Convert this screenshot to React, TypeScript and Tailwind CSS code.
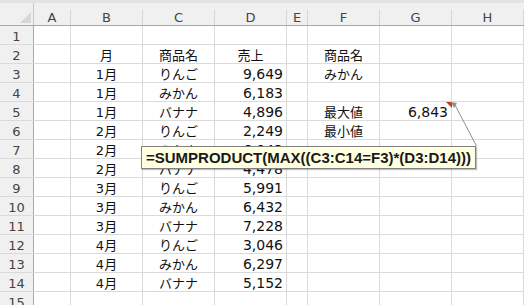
import React from 'react';

type Row = {
  b?: string;
  c?: string;
  d?: string;
  f?: string;
  g?: string;
};

const rows: Row[] = [
  {},
  { b: '月', c: '商品名', d: '売上', f: '商品名' },
  { b: '1月', c: 'りんご', d: '9,649', f: 'みかん' },
  { b: '1月', c: 'みかん', d: '6,183' },
  { b: '1月', c: 'バナナ', d: '4,896', f: '最大値', g: '6,843' },
  { b: '2月', c: 'りんご', d: '2,249', f: '最小値' },
  { b: '2月', c: 'みかん', d: '6,843' },
  { b: '2月', c: 'バナナ', d: '4,478' },
  { b: '3月', c: 'りんご', d: '5,991' },
  { b: '3月', c: 'みかん', d: '6,432' },
  { b: '3月', c: 'バナナ', d: '7,228' },
  { b: '4月', c: 'りんご', d: '3,046' },
  { b: '4月', c: 'みかん', d: '6,297' },
  { b: '4月', c: 'バナナ', d: '5,152' },
  {},
];

const columns = [
  { key: 'A', w: 'w-[37px]' },
  { key: 'B', w: 'w-[72px]' },
  { key: 'C', w: 'w-[72px]' },
  { key: 'D', w: 'w-[72px]' },
  { key: 'E', w: 'w-[21px]' },
  { key: 'F', w: 'w-[72px]' },
  { key: 'G', w: 'w-[72px]' },
  { key: 'H', w: 'w-[72px]' },
];

const isNum = (s?: string) => !!s && /^[\d,]+$/.test(s);

const Cell: React.FC<{ w: string; text?: string; align: 'center' | 'right' }> = ({ w, text, align }) => (
  <div
    className={`${w} h-full shrink-0 flex items-center border-r border-[#dadada] ${
      align === 'right' ? 'justify-end pr-[3px]' : 'justify-center'
    }`}
  >
    {text && (
      <span className={`pt-[2px] text-[#111] leading-none ${isNum(text) ? 'text-[14px]' : 'text-[13px]'}`}>{text}</span>
    )}
  </div>
);

export default function App() {
  return (
    <div
      className="relative w-[524px] h-[305px] overflow-hidden bg-white"
      style={{ fontFamily: '"DejaVu Sans", "Noto Sans CJK JP", sans-serif' }}
    >
      <div className="h-[3px] bg-[#e3e3e3]" />

      {/* column headers */}
      <div className="flex h-[23px] bg-[#f0f0f0] border-b border-[#a8a8a8]">
        <div className="w-[34px] shrink-0 h-full border-r border-[#c8c8c8] relative">
          <svg className="absolute left-0 top-0" width="34" height="22" viewBox="0 0 34 22">
            <polygon points="31,9 31,20 20,20" fill="#d6d6d6" />
          </svg>
        </div>
        {columns.map((c) => (
          <div key={c.key} className={`${c.w} shrink-0 h-full flex items-end`}>
            <div className="flex-1 h-[15px] border-r border-[#d6d6d6] flex items-center justify-center text-[13px] leading-none text-[#444] pb-[1px]">
              {c.key}
            </div>
          </div>
        ))}
      </div>

      {/* rows */}
      {rows.map((r, i) => (
        <div key={i} className="flex h-[19px] border-b border-[#dadada]">
          <div className="w-[34px] shrink-0 h-full bg-[#f0f0f0] border-r border-[#a8a8a8] flex items-center justify-center text-[13px] leading-none text-[#444] pt-[2px]">
            {i + 1}
          </div>
          <Cell w="w-[37px]" align="center" />
          <Cell w="w-[72px]" text={r.b} align="center" />
          <Cell w="w-[72px]" text={r.c} align="center" />
          <Cell w="w-[72px]" text={r.d} align={isNum(r.d) ? 'right' : 'center'} />
          <Cell w="w-[21px]" align="center" />
          <Cell w="w-[72px]" text={r.f} align="center" />
          <Cell w="w-[72px]" text={r.g} align="right" />
          <Cell w="w-[72px]" align="center" />
        </div>
      ))}

      {/* comment marker and arrow */}
      <svg className="absolute left-0 top-0 pointer-events-none" width="524" height="305" viewBox="0 0 524 305">
        <polygon points="446,102 452,102 452,108" fill="#c43c1c" />
        <line x1="455" y1="105" x2="476.5" y2="146" stroke="#8f8f8f" strokeWidth="1" />
        <polygon points="451,102 457,103 454,108" fill="#8f8f8f" />
      </svg>

      {/* formula tooltip */}
      <div
        className="absolute left-[141px] top-[146px] w-[335px] h-[23px] bg-[#ffffe1] border border-[#808080] shadow-[1px_1px_1px_rgba(0,0,0,0.25)] flex items-center pl-[4px] text-[15px] font-bold text-[#1a1a1a] leading-none whitespace-nowrap"
        style={{ fontFamily: '"Liberation Sans", Arial, sans-serif' }}
      >
        =SUMPRODUCT(MAX((C3:C14=F3)*(D3:D14)))
      </div>
    </div>
  );
}
